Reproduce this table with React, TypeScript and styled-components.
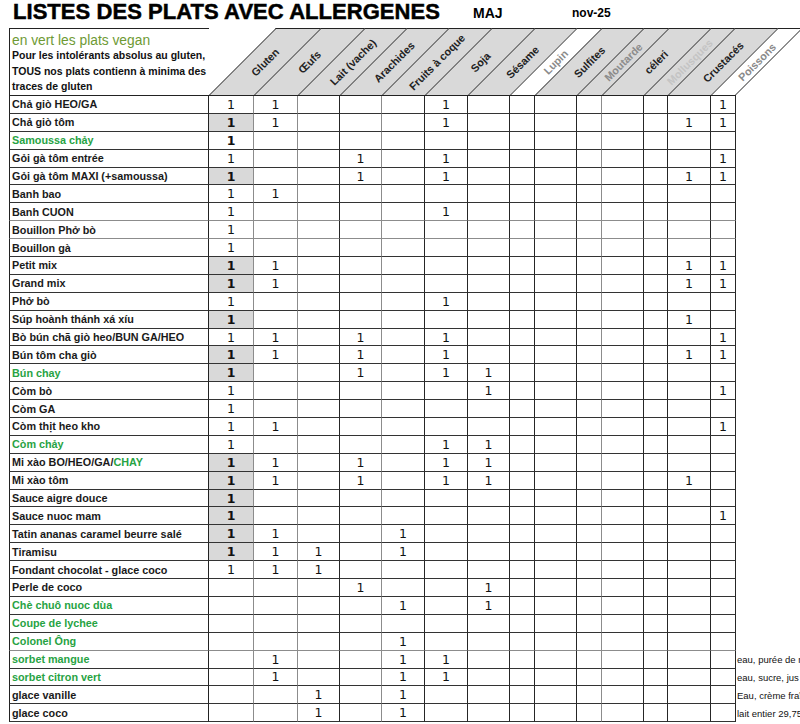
import React from 'react'
import styled, { createGlobalStyle } from 'styled-components'

const GlobalStyle = createGlobalStyle`
  html, body {
    margin: 0;
    padding: 0;
    background: #fff;
  }
  body {
    width: 800px;
    height: 724px;
    overflow: hidden;
    font-family: "Liberation Sans", Arial, sans-serif;
    color: #111;
  }
`

type Allergen = {
  label: string
  width: number
  light?: boolean
  ink?: string
  line?: string
}

const ALLERGENS: Allergen[] = [
  { label: 'Gluten', width: 45, line: '#8c8c8c' },
  { label: 'Œufs', width: 44, line: '#8c8c8c' },
  { label: 'Lait (vache)', width: 42 },
  { label: 'Arachides', width: 42, line: '#8c8c8c' },
  { label: 'Fruits à coque', width: 43 },
  { label: 'Soja', width: 43 },
  { label: 'Sésame', width: 42 },
  { label: 'Lupin', width: 25, light: true, ink: '#8a8a8a' },
  { label: 'Sulfites', width: 42 },
  { label: 'Moutarde', width: 25, ink: '#8c8c8c', line: '#8c8c8c' },
  { label: 'céleri', width: 42 },
  { label: 'Mollusques', width: 24, ink: '#c4c4c4' },
  { label: 'Crustacés', width: 43 },
  { label: 'Poissons', width: 25, light: true, ink: '#8a8a8a' },
]

const COLUMNS = `200px ${ALLERGENS.map((a) => `${a.width}px`).join(' ')} 1fr`

type Dish = {
  name: React.ReactNode
  vegan?: boolean
  has: number[]
  shade?: boolean
  strong?: boolean
  soft?: boolean
  note?: string
}

const Green = styled.span`
  color: #27a343;
`

const DISHES: Dish[] = [
  { name: 'Chả giò HEO/GA', has: [0, 1, 5, 13] },
  { name: 'Chả giò tôm', has: [0, 1, 5, 12, 13], shade: true },
  { name: 'Samoussa chảy', vegan: true, has: [0], strong: true },
  { name: 'Gỏi gà tôm entrée', has: [0, 3, 5, 13] },
  { name: 'Gỏi gà tôm MAXI (+samoussa)', has: [0, 3, 5, 12, 13], shade: true },
  { name: 'Banh bao', has: [0, 1] },
  { name: 'Banh CUON', has: [0, 5], soft: true },
  { name: 'Bouillon Phở bò', has: [0], soft: true },
  { name: 'Bouillon gà', has: [0] },
  { name: 'Petit mix', has: [0, 1, 12, 13], shade: true },
  { name: 'Grand mix', has: [0, 1, 12, 13], shade: true },
  { name: 'Phở bò', has: [0, 5] },
  { name: 'Súp hoành thánh xá xíu', has: [0, 12], shade: true },
  { name: 'Bò bún chã giò heo/BUN GA/HEO', has: [0, 1, 3, 5, 13] },
  { name: 'Bún tôm cha giò', has: [0, 1, 3, 5, 12, 13], shade: true },
  { name: 'Bún chay', vegan: true, has: [0, 3, 5, 6], shade: true },
  { name: 'Còm bò', has: [0, 6, 13] },
  { name: 'Còm GA', has: [0] },
  { name: 'Còm thịt heo kho', has: [0, 1, 13] },
  { name: 'Còm chảy', vegan: true, has: [0, 5, 6] },
  {
    name: (
      <>
        Mi xào BO/HEO/GA/<Green>CHAY</Green>
      </>
    ),
    has: [0, 1, 3, 5, 6],
    shade: true,
  },
  { name: 'Mi xào tôm', has: [0, 1, 3, 5, 6, 12], shade: true },
  { name: 'Sauce aigre douce', has: [0], shade: true },
  { name: 'Sauce nuoc mam', has: [0, 13], shade: true },
  { name: 'Tatin ananas caramel beurre salé', has: [0, 1, 4], shade: true },
  { name: 'Tiramisu', has: [0, 1, 2, 4], shade: true },
  { name: 'Fondant chocolat - glace coco', has: [0, 1, 2] },
  { name: 'Perle de coco', has: [3, 6] },
  { name: 'Chè chuô nuoc dùa', vegan: true, has: [4, 6] },
  { name: 'Coupe de lychee', vegan: true, has: [] },
  { name: 'Colonel Ông', vegan: true, has: [4], soft: true },
  { name: 'sorbet mangue', vegan: true, has: [1, 4, 5], note: 'eau, purée de mangue, sucre' },
  { name: 'sorbet citron vert', vegan: true, has: [1, 4, 5], note: 'eau, sucre, jus de citron vert' },
  { name: 'glace vanille', has: [2, 4], note: 'Eau, crème fraîche, sucre' },
  { name: 'glace coco', has: [2, 4], note: 'lait entier 29,75%' },
]

const Sheet = styled.div`
  padding-left: 9px;
  width: 791px;
`

const TitleBar = styled.div`
  display: grid;
  grid-template-columns: 460px 99px auto;
  height: 28px;
  padding-left: 4px;
  line-height: 20px;
  font-weight: bold;
  color: #000;
`

const Title = styled.div`
  padding-top: 2px;
  font-size: 22px;
  font-weight: 900;
  letter-spacing: 0.05px;
  -webkit-text-stroke: 0.5px #000;
  white-space: nowrap;
`

const Stamp = styled.div<{ $size: number }>`
  padding-top: 3px;
  font-size: ${(p) => p.$size}px;
  white-space: nowrap;
`

const Header = styled.div`
  display: grid;
  grid-template-columns: ${COLUMNS};
  height: 68px;
`

const InfoCell = styled.div`
  box-sizing: border-box;
  border-top: 1px solid #222;
  border-left: 1px solid #222;
  border-bottom: 1px solid #222;
  padding: 4px 0 0 2px;
  overflow: hidden;
`

const VeganHint = styled.div`
  color: #6e9a34;
  font-size: 13.8px;
  line-height: 15px;
  white-space: nowrap;
`

const InfoText = styled.div`
  font-size: 10.5px;
  font-weight: bold;
  line-height: 15.5px;
  white-space: nowrap;
`

const HeadCell = styled.div`
  box-sizing: border-box;
  border-bottom: 1px solid #222;
`

const Stripe = styled.div<{ $light?: boolean; $last?: boolean }>`
  box-sizing: border-box;
  width: 100%;
  height: 100%;
  display: flex;
  align-items: center;
  justify-content: center;
  background: ${(p) => (p.$light ? '#fff' : '#d9d9d9')};
  border-left: 1px solid #222;
  border-top: 1px solid #222;
  border-right: ${(p) => (p.$last ? '1px solid #222' : '0')};
  transform: skewX(-45deg);
  transform-origin: bottom left;
`

const StripeLabel = styled.span<{ $ink?: string }>`
  display: block;
  white-space: nowrap;
  font-size: 10.8px;
  font-weight: bold;
  color: ${(p) => p.$ink || '#222'};
  transform: skewX(45deg) rotate(-45deg);
`

const Row = styled.div`
  display: grid;
  grid-template-columns: ${COLUMNS};
  height: 17.9px;
  box-sizing: border-box;
`

const NameCell = styled.div<{ $vegan?: boolean; $soft?: boolean }>`
  box-sizing: border-box;
  display: flex;
  align-items: center;
  padding-left: 2px;
  border-left: 1px solid #222;
  border-right: 1px solid #222;
  border-bottom: 1px solid ${(p) => (p.$soft ? '#8c8c8c' : '#333')};
  font-size: 10.8px;
  font-weight: bold;
  white-space: nowrap;
  overflow: hidden;
  color: ${(p) => (p.$vegan ? '#27a343' : '#1a1a1a')};
`

const ValueCell = styled.div<{ $line?: string; $shade?: boolean; $strong?: boolean; $soft?: boolean }>`
  box-sizing: border-box;
  display: flex;
  align-items: center;
  justify-content: center;
  border-right: 1px solid ${(p) => p.$line || '#262626'};
  border-bottom: 1px solid ${(p) => (p.$soft ? '#8c8c8c' : '#333')};
  background: ${(p) => (p.$shade ? '#d9d9d9' : '#fff')};
  font-family: "DejaVu Sans", "Liberation Sans", sans-serif;
  font-size: 12.5px;
  font-weight: ${(p) => (p.$strong ? 'bold' : 'normal')};
  color: #111;
`

const NoteCell = styled.div`
  display: flex;
  align-items: center;
  padding-left: 1px;
  font-size: 9.5px;
  color: #111;
  white-space: nowrap;
  overflow: hidden;
`

export default function App() {
  return (
    <>
      <GlobalStyle />
      <Sheet>
        <TitleBar>
          <Title>LISTES DES PLATS AVEC ALLERGENES</Title>
          <Stamp $size={14}>MAJ</Stamp>
          <Stamp $size={12}>nov-25</Stamp>
        </TitleBar>

        <Header>
          <InfoCell>
            <VeganHint>en vert les plats vegan</VeganHint>
            <InfoText>Pour les intolérants absolus au gluten,</InfoText>
            <InfoText>TOUS nos plats contienn à minima des</InfoText>
            <InfoText>traces de gluten</InfoText>
          </InfoCell>
          {ALLERGENS.map((a, i) => (
            <HeadCell key={a.label}>
              <Stripe $light={a.light} $last={i === ALLERGENS.length - 1}>
                <StripeLabel $ink={a.ink}>{a.label}</StripeLabel>
              </Stripe>
            </HeadCell>
          ))}
          <div />
        </Header>

        {DISHES.map((d, r) => (
          <Row key={r}>
            <NameCell $vegan={d.vegan} $soft={d.soft}>
              {d.name}
            </NameCell>
            {ALLERGENS.map((a, c) => (
              <ValueCell
                key={a.label}
                $line={a.line}
                $soft={d.soft}
                $shade={c === 0 && d.shade}
                $strong={c === 0 && (d.shade || d.strong)}
              >
                {d.has.includes(c) ? '1' : ''}
              </ValueCell>
            ))}
            <NoteCell>{d.note}</NoteCell>
          </Row>
        ))}
      </Sheet>
    </>
  )
}
